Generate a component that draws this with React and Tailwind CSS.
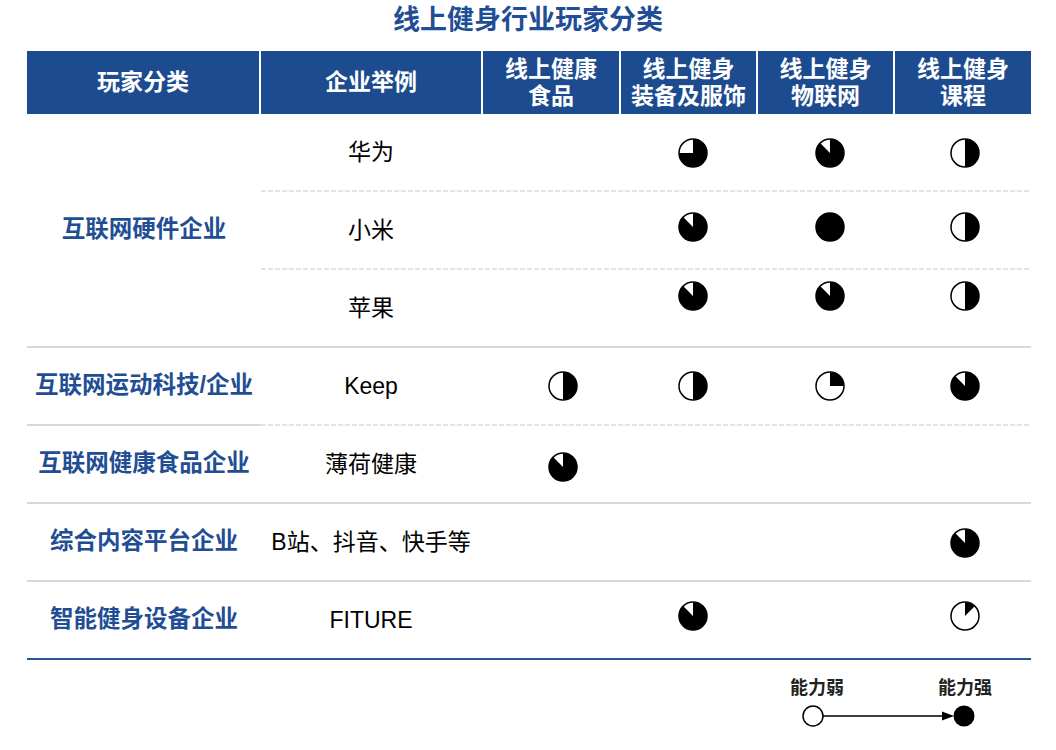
import React from "react";

const GRID_BODY = "grid grid-cols-[220px_136px_135px_135px_136px] gap-x-[2px]";
const OFFS = ["pl-[24px]", "pl-[9px]", "pl-[9px]", "pl-[4px]"];

function Ball({ f }) {
  if (f == null) return null;
  let wedge;
  if (f >= 1) {
    wedge = <circle cx="15" cy="15" r="14" fill="black" />;
  } else {
    const a = f * 2 * Math.PI;
    const x = 15 + 14 * Math.sin(a);
    const y = 15 - 14 * Math.cos(a);
    const large = f > 0.5 ? 1 : 0;
    wedge = <path d={`M15 15 L15 1 A14 14 0 ${large} 1 ${x.toFixed(2)} ${y.toFixed(2)} Z`} fill="black" />;
  }
  return (
    <svg width="30" height="30" viewBox="0 0 30 30">
      <circle cx="15" cy="15" r="14" fill="white" stroke="black" strokeWidth="1.5" />
      {wedge}
    </svg>
  );
}

function Cells({ name, balls, dy = "" }) {
  return (
    <div className={`${GRID_BODY} h-[76px]`}>
      <div className="flex items-center justify-center text-[23px] text-black">{name}</div>
      {balls.map((b, i) => (
        <div key={i} className={`flex items-center justify-center ${OFFS[i]}`}>
          <div className={dy}>
            <Ball f={b} />
          </div>
        </div>
      ))}
    </div>
  );
}

function Label({ children }) {
  return (
    <div className="w-[234px] flex items-center justify-center text-[23.5px] font-bold text-[#1f4e94] whitespace-nowrap">
      {children}
    </div>
  );
}

const Dashed = () => (
  <div className="h-[2px] bg-[repeating-linear-gradient(90deg,#e4e4e4_0px,#e4e4e4_5px,transparent_5px,transparent_7px)]" />
);

function SimpleRow({ label, name, balls, bottom = "solid", dy }) {
  return (
    <div className="flex flex-col">
      <div className="flex h-[76px]">
        <Label>{label}</Label>
        <div className="flex-1">
          <Cells name={name} balls={balls} dy={dy} />
        </div>
      </div>
      {bottom === "solid" && <div className="h-[2px] bg-[#d9d9d9]" />}
      {bottom === "split" && (
        <div className="flex">
          <div className="w-[234px] h-[2px] bg-[#d9d9d9]" />
          <div className="flex-1">
            <Dashed />
          </div>
        </div>
      )}
      {bottom === "blue" && <div className="h-[2px] bg-[#2f5496]" />}
    </div>
  );
}

const HEAD = ["玩家分类", "企业举例", "线上健康\n食品", "线上健身\n装备及服饰", "线上健身\n物联网", "线上健身\n课程"];

export default function App() {
  return (
    <div className="w-[1056px] h-[750px] bg-white font-['Liberation_Sans','Noto_Sans_CJK_SC',sans-serif] overflow-hidden">
      <div className="h-[51px] pt-[5px] text-center text-[27px] leading-[30px] font-bold text-[#1f4e96]">
        线上健身行业玩家分类
      </div>
      <div className="mx-[27px] w-[1004px]">
        <div className="grid grid-cols-[232px_220px_136px_135px_135px_136px] gap-x-[2px] h-[63px]">
          {HEAD.map((t, i) => (
            <div
              key={i}
              className="bg-[#1d4b8f] flex items-center justify-center text-center text-white font-bold text-[23px] leading-[27px] whitespace-pre-line"
            >
              {t}
            </div>
          ))}
        </div>

        {/* Group 1 */}
        <div className="flex flex-col">
          <div className="flex">
            <Label>互联网硬件企业</Label>
            <div className="flex-1 flex flex-col">
              <Cells name="华为" balls={[null, 0.75, 0.875, 0.5]} dy="translate-y-[1px]" />
              <Dashed />
              <Cells name="小米" balls={[null, 0.875, 1, 0.5]} dy="-translate-y-[3px]" />
              <Dashed />
              <Cells name="苹果" balls={[null, 0.875, 0.875, 0.5]} dy="-translate-y-[12px]" />
            </div>
          </div>
          <div className="h-[2px] bg-[#d9d9d9]" />
        </div>

        <SimpleRow label="互联网运动科技/企业" name="Keep" balls={[0.5, 0.5, 0.25, 0.875]} bottom="split" />
        <SimpleRow label="互联网健康食品企业" name="薄荷健康" balls={[0.875, null, null, null]} dy="translate-y-[3px]" />
        <SimpleRow label="综合内容平台企业" name="B站、抖音、快手等" balls={[null, null, null, 0.875]} dy="translate-y-[1px]" />
        <SimpleRow label="智能健身设备企业" name="FITURE" balls={[null, 0.875, null, 0.125]} bottom="blue" dy="-translate-y-[4px]" />
      </div>

      {/* Legend */}
      <div className="ml-[790px] mt-[16px] w-[202px] flex flex-col">
        <div className="flex justify-between text-[18px] leading-[24px] font-bold text-[#222]">
          <span>能力弱</span>
          <span>能力强</span>
        </div>
        <svg className="mt-[4px]" width="202" height="24" viewBox="0 0 202 24">
          <line x1="33" y1="12" x2="155" y2="12" stroke="black" strokeWidth="1.5" />
          <polygon points="152,7.5 164,12 152,16.5" fill="black" />
          <circle cx="23" cy="12" r="10" fill="white" stroke="black" strokeWidth="1.5" />
          <circle cx="174" cy="12" r="10.5" fill="black" />
        </svg>
      </div>
    </div>
  );
}
